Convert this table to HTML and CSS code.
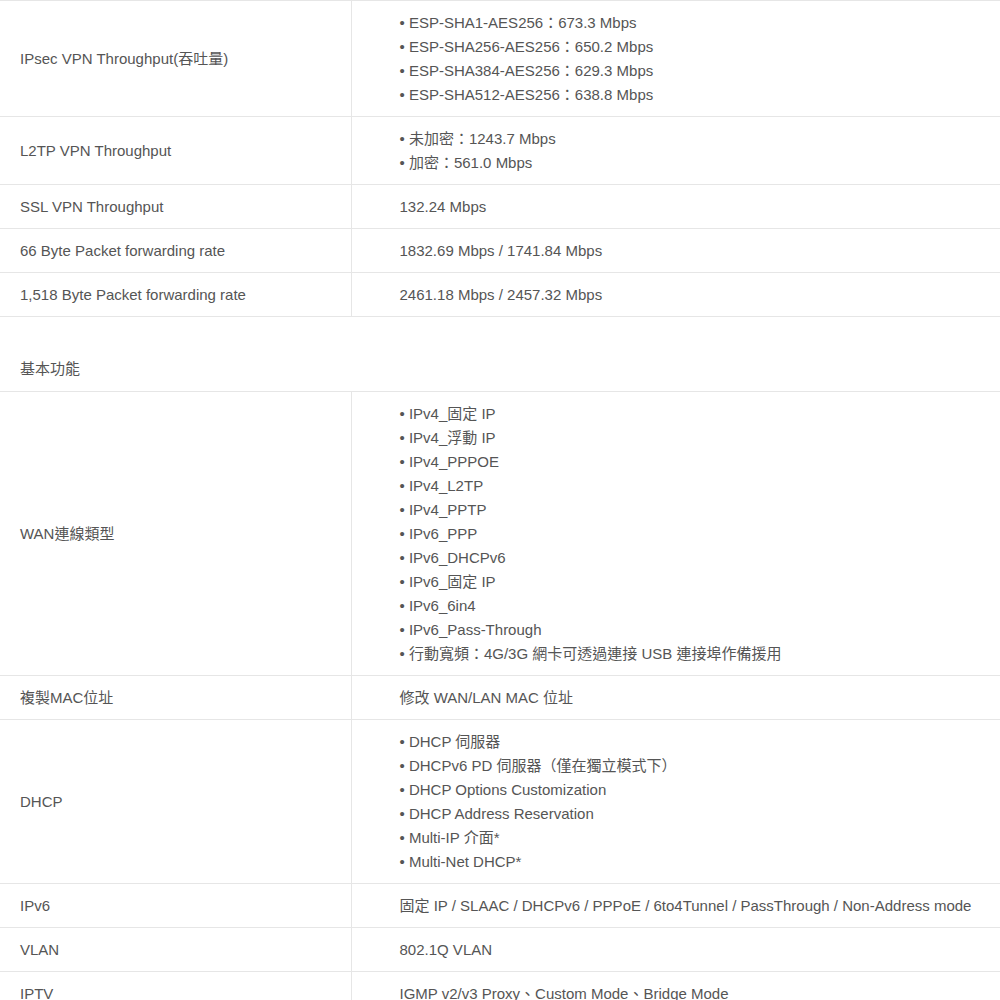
FILE: index.html
```html
<!DOCTYPE html>
<html lang="zh-Hant">
<head>
    <meta charset="UTF-8">
    <meta name="viewport" content="width=device-width, initial-scale=1.0">
    <title>規格</title>
    <link rel="stylesheet" href="styles.css">
</head>
<body>
    <div class="spec">
        <!-- 效能 -->
        <table class="spec-table">
            <tr>
                <td class="name">IPsec VPN Throughput(吞吐量)</td>
                <td class="value">
                    <ul>
                        <li>ESP-SHA1-AES256：673.3 Mbps</li>
                        <li>ESP-SHA256-AES256：650.2 Mbps</li>
                        <li>ESP-SHA384-AES256：629.3 Mbps</li>
                        <li>ESP-SHA512-AES256：638.8 Mbps</li>
                    </ul>
                </td>
            </tr>
            <tr>
                <td class="name">L2TP VPN Throughput</td>
                <td class="value">
                    <ul>
                        <li>未加密：1243.7 Mbps</li>
                        <li>加密：561.0 Mbps</li>
                    </ul>
                </td>
            </tr>
            <tr>
                <td class="name">SSL VPN Throughput</td>
                <td class="value">132.24 Mbps</td>
            </tr>
            <tr>
                <td class="name">66 Byte Packet forwarding rate</td>
                <td class="value">1832.69 Mbps / 1741.84 Mbps</td>
            </tr>
            <tr>
                <td class="name">1,518 Byte Packet forwarding rate</td>
                <td class="value">2461.18 Mbps / 2457.32 Mbps</td>
            </tr>
        </table>

        <!-- 基本功能 -->
        <h2 class="section">基本功能</h2>

        <table class="spec-table">
            <tr>
                <td class="name">WAN連線類型</td>
                <td class="value">
                    <ul>
                        <li>IPv4_固定 IP</li>
                        <li>IPv4_浮動 IP</li>
                        <li>IPv4_PPPOE</li>
                        <li>IPv4_L2TP</li>
                        <li>IPv4_PPTP</li>
                        <li>IPv6_PPP</li>
                        <li>IPv6_DHCPv6</li>
                        <li>IPv6_固定 IP</li>
                        <li>IPv6_6in4</li>
                        <li>IPv6_Pass-Through</li>
                        <li>行動寬頻：4G/3G 網卡可透過連接 USB 連接埠作備援用</li>
                    </ul>
                </td>
            </tr>
            <tr>
                <td class="name">複製MAC位址</td>
                <td class="value">修改 WAN/LAN MAC 位址</td>
            </tr>
            <tr>
                <td class="name">DHCP</td>
                <td class="value">
                    <ul>
                        <li>DHCP 伺服器</li>
                        <li>DHCPv6 PD 伺服器（僅在獨立模式下）</li>
                        <li>DHCP Options Customization</li>
                        <li>DHCP Address Reservation</li>
                        <li>Multi-IP 介面*</li>
                        <li>Multi-Net DHCP*</li>
                    </ul>
                </td>
            </tr>
            <tr>
                <td class="name">IPv6</td>
                <td class="value">固定 IP / SLAAC / DHCPv6 / PPPoE / 6to4Tunnel / PassThrough / Non-Address mode</td>
            </tr>
            <tr>
                <td class="name">VLAN</td>
                <td class="value">802.1Q VLAN</td>
            </tr>
            <tr>
                <td class="name">IPTV</td>
                <td class="value">IGMP v2/v3 Proxy、Custom Mode、Bridge Mode</td>
            </tr>
        </table>
    </div>
</body>
</html>
```

FILE: styles.css
```css
* { box-sizing: border-box; }
body {
    margin: 0;
    padding: 0;
    font-family: "Liberation Sans", Arial, "Noto Sans CJK TC", sans-serif;
    font-size: 15px;
    line-height: 24px;
    color: #555;
    background-color: #fff;
}
.spec {
    width: 1000px;
}
.spec-table {
    width: 100%;
    border-collapse: collapse;
    border-top: 1px solid #e6e6e6;
}
.spec-table td {
    border-bottom: 1px solid #e6e6e6;
    padding: 10px 0 9px 0;
    vertical-align: middle;
}
.spec-table .name {
    width: 351px;
    padding-left: 20px;
    border-right: 1px solid #e6e6e6;
}
.spec-table .value {
    padding-left: 48px;
}
.spec-table ul {
    margin: 0;
    padding: 0;
    list-style: none;
}
.spec-table li {
    height: 24px;
    white-space: nowrap;
}
.spec-table li::before {
    content: "\2022\00a0";
}
.section {
    margin: 0;
    padding: 40px 0 10px 20px;
    font-size: 15px;
    font-weight: normal;
    line-height: 24px;
    color: #555;
}
```
